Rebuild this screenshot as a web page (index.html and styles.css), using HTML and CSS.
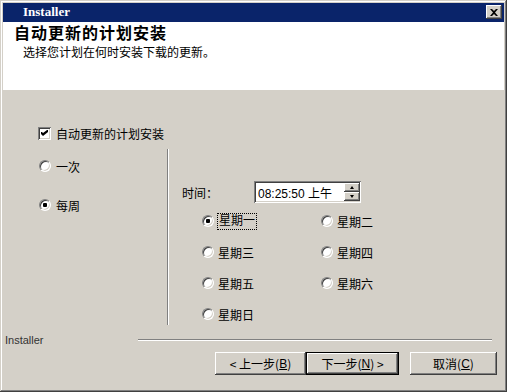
FILE: index.html
```html
<!DOCTYPE html>
<html lang="zh-CN">
<head>
  <meta charset="UTF-8" />
  <title>Installer</title>
  <link rel="stylesheet" href="styles.css">
</head>
<body>

  <div class="window">
    <div class="titlebar">
      <span class="titlebar-text">Installer</span>
      <span class="close-btn">
        <svg width="8" height="7" viewBox="0 0 8 7"><path d="M0 0h2l2 2 2-2h2L5 3.5 8 7H6L4 5 2 7H0l3-3.5z" fill="#000"/></svg>
      </span>
    </div>

    <!-- Banner -->
    <div class="banner">
      <h1>自动更新的计划安装</h1>
      <p>选择您计划在何时安装下载的更新。</p>
    </div>

    <div class="main">
      <div class="option check-row">
        <span class="checkbox">
          <svg width="7" height="7" viewBox="0 0 7 7"><path d="M0 2h1l1 1 4-3h1v2L2 6 0 4z" fill="#000"/></svg>
        </span>
        <span>自动更新的计划安装</span>
      </div>

      <div class="schedule">
        <div class="freq">
          <div class="option"><span class="radio"></span><span>一次</span></div>
          <div class="option"><span class="radio checked"></span><span>每周</span></div>
        </div>

        <div class="divider"></div>

        <div class="weekly">
          <div class="time-row">
            <span class="time-label">时间：</span>
            <div class="time-field">
              <span class="time-value">08:25:50 上午</span>
              <div class="spinner">
                <span class="spin-btn"><i class="tri up"></i></span>
                <span class="spin-btn"><i class="tri down"></i></span>
              </div>
            </div>
          </div>

          <div class="days">
            <div class="option"><span class="radio checked"></span><span class="focus">星期一</span></div>
            <div class="option"><span class="radio"></span><span>星期二</span></div>
            <div class="option"><span class="radio"></span><span>星期三</span></div>
            <div class="option"><span class="radio"></span><span>星期四</span></div>
            <div class="option"><span class="radio"></span><span>星期五</span></div>
            <div class="option"><span class="radio"></span><span>星期六</span></div>
            <div class="option"><span class="radio"></span><span>星期日</span></div>
          </div>
        </div>
      </div>

      <div class="footer">
        <div class="brand-row">
          <span class="brand">Installer</span>
          <span class="rule"></span>
        </div>
        <div class="buttons">
          <span class="btn btn-back">&lt; 上一步(<u>B</u>)</span>
          <span class="btn btn-default">下一步(<u>N</u>) &gt;</span>
          <span class="btn btn-cancel">取消(<u>C</u>)</span>
        </div>
      </div>
    </div>
  </div>

</body>
</html>
```

FILE: styles.css
```css
* {
  margin: 0;
  padding: 0;
  box-sizing: border-box;
}

body {
  background: #d4d0c8;
  font-family: "Liberation Sans", "Noto Sans CJK SC", sans-serif;
  font-size: 12px;
  color: #000;
}

.window {
  width: 507px;
  height: 392px;
  padding: 3px;
  background: #d4d0c8;
  display: flex;
  flex-direction: column;
  box-shadow: inset -1px -1px #404040, inset 1px 1px #d4d0c8,
              inset -2px -2px #808080, inset 2px 2px #fff;
}

.titlebar {
  height: 19px;
  background: #0a246a;
  display: flex;
  align-items: center;
  justify-content: space-between;
  padding: 0 2px 1px 20px;
}

.titlebar-text {
  color: #fff;
  font-family: "Liberation Serif", serif;
  font-weight: bold;
  font-size: 13px;
}

.close-btn {
  width: 16px;
  height: 14px;
  background: #d4d0c8;
  display: flex;
  align-items: center;
  justify-content: center;
  box-shadow: inset -1px -1px #404040, inset 1px 1px #fff,
              inset -2px -2px #808080;
}

.banner {
  height: 68px;
  background: #fff;
  padding: 0 0 0 11px;
}

.banner h1 {
  font-family: "Noto Sans CJK SC", sans-serif;
  font-size: 16px;
  font-weight: bold;
  letter-spacing: 1px;
  line-height: 21px;
}

.banner p {
  font-family: "Noto Sans CJK SC", sans-serif;
  padding-left: 9px;
  margin-top: 2px;
  line-height: 14px;
}

.main {
  flex: 1;
  display: flex;
  flex-direction: column;
  padding-top: 36px;
}

.option {
  display: flex;
  align-items: center;
  gap: 4px;
  height: 14px;
}

.check-row {
  padding-left: 35px;
  gap: 5px;
}

.checkbox {
  width: 13px;
  height: 13px;
  background: #fff;
  display: flex;
  align-items: center;
  justify-content: center;
  box-shadow: inset 1px 1px #808080, inset -1px -1px #fff,
              inset 2px 2px #404040, inset -2px -2px #d4d0c8;
}

.radio {
  width: 12px;
  height: 12px;
  border-radius: 50%;
  background: #fff;
  border: 1px solid;
  border-color: #808080 #fff #fff #808080;
  box-shadow: inset 1px 1px #404040, inset -1px -1px #d4d0c8;
}

.radio.checked {
  background: radial-gradient(circle, #000 0 2px, #fff 2.5px);
}

.schedule {
  display: flex;
  height: 176px;
  margin-top: 9px;
}

.freq {
  width: 164px;
  padding: 10px 0 0 36px;
  display: flex;
  flex-direction: column;
  gap: 25px;
}

.freq .option {
  gap: 5px;
}

.divider {
  width: 2px;
  border-left: 1px solid #808080;
  border-right: 1px solid #fff;
}

.weekly {
  padding: 32px 0 0 13px;
}

.time-row {
  display: flex;
  align-items: center;
}

.time-label {
  width: 72px;
}

.time-field {
  width: 107px;
  height: 22px;
  background: #fff;
  display: flex;
  align-items: center;
  justify-content: space-between;
  padding: 2px 1px 2px 4px;
  box-shadow: inset 1px 1px #808080, inset -1px -1px #fff,
              inset 2px 2px #404040, inset -2px -2px #d4d0c8;
}

.spinner {
  display: flex;
  flex-direction: column;
  width: 16px;
  height: 18px;
}

.spin-btn {
  flex: 1;
  background: #d4d0c8;
  display: flex;
  align-items: center;
  justify-content: center;
  box-shadow: inset -1px -1px #404040, inset 1px 1px #fff,
              inset -2px -2px #808080;
}

.tri {
  width: 0;
  height: 0;
  border-left: 2.5px solid transparent;
  border-right: 2.5px solid transparent;
}

.tri.up {
  border-bottom: 3px solid #000;
}

.tri.down {
  border-top: 3px solid #000;
}

.days {
  display: grid;
  grid-template-columns: 119px 119px;
  grid-auto-rows: 24px;
  row-gap: 7px;
  margin: 6px 0 0 20px;
}

.days .option {
  height: 24px;
}

.focus {
  outline: 1px dotted #000;
  outline-offset: 0;
  padding: 0 1px;
  line-height: 15px;
}

.footer {
  margin-top: 8px;
}

.brand-row {
  display: flex;
  align-items: center;
  height: 14px;
  padding: 0 12px 0 2px;
}

.brand {
  width: 133px;
  color: #333;
  font-size: 11px;
}

.rule {
  flex: 1;
  height: 2px;
  border-top: 1px solid #808080;
  border-bottom: 1px solid #fff;
}

.buttons {
  display: flex;
  justify-content: flex-end;
  padding: 5px 7px 0 0;
}

.btn {
  height: 23px;
  width: 91px;
  display: flex;
  align-items: center;
  justify-content: center;
  font-family: "Noto Sans CJK SC", sans-serif;
  background: #d4d0c8;
  box-shadow: inset -1px -1px #404040, inset 1px 1px #fff,
              inset -2px -2px #808080, inset 2px 2px #d4d0c8;
}

.btn u {
  font-family: "Liberation Sans", sans-serif;
}

.btn-default {
  width: 93px;
  border: 1px solid #000;
  height: 23px;
}

.btn-cancel {
  width: 87px;
  margin-left: 11px;
}
```
